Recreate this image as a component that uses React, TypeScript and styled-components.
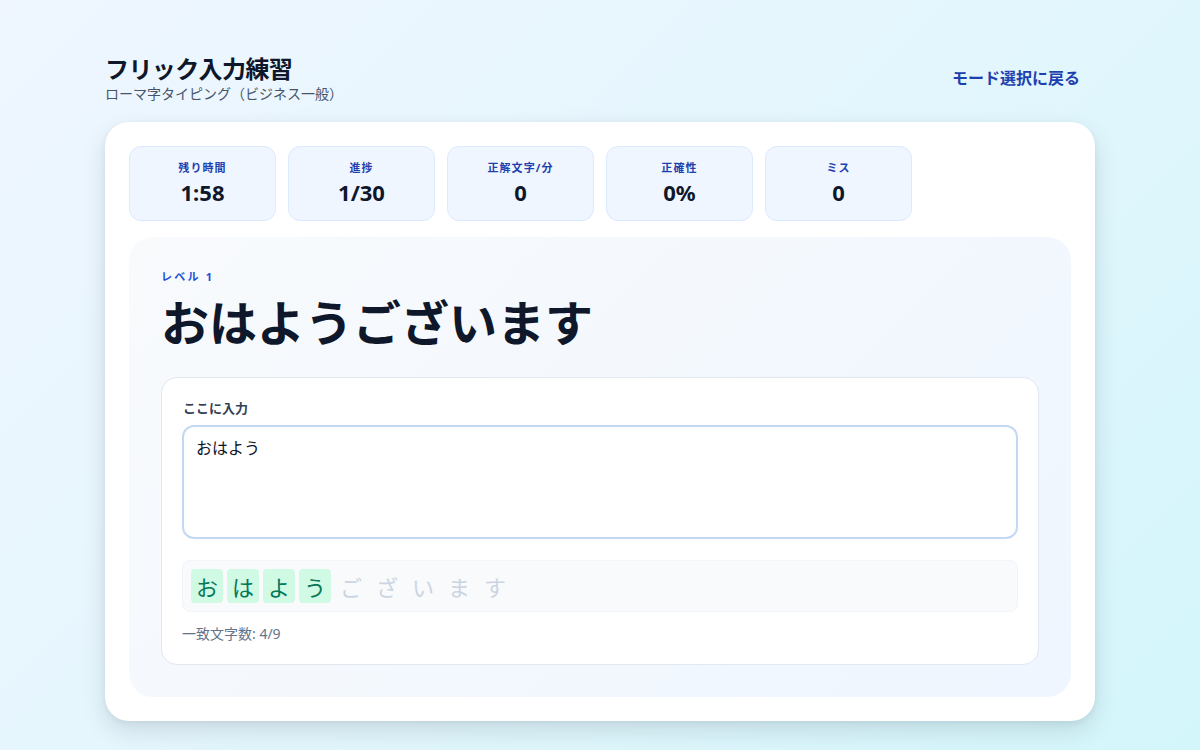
import React from "react";
import styled, { createGlobalStyle } from "styled-components";

const FONT = `"Noto Sans", "Noto Sans CJK JP", sans-serif`;

const Global = createGlobalStyle`
  * { box-sizing: border-box; }
  html, body { margin: 0; padding: 0; }
  body {
    font-family: ${FONT};
    color: #0f172a;
    min-height: 750px;
    background: linear-gradient(135deg, #eff6ff 0%, #e4f6fd 50%, #d3f6fb 100%);
  }
`;

const Page = styled.div`
  width: 1200px;
  height: 750px;
  padding: 54px 105px 0 105px;
  display: flex;
  flex-direction: column;
`;

const Header = styled.header`
  display: flex;
  justify-content: space-between;
  align-items: center;
  padding-right: 15px;
  margin-bottom: 18px;
`;

const TitleBlock = styled.div`
  display: flex;
  flex-direction: column;
`;

const Title = styled.h1`
  margin: 0;
  font-size: 24px;
  line-height: 30px;
  font-weight: 700;
  letter-spacing: -0.025em;
  color: #0f172a;
`;

const Subtitle = styled.p`
  margin: 0;
  font-size: 14px;
  line-height: 20px;
  color: #475569;
`;

const BackLink = styled.a`
  font-size: 16px;
  font-weight: 600;
  color: #1e40af;
  text-decoration: none;
  margin-top: -4px;
`;

const Card = styled.main`
  background: #ffffff;
  border-radius: 24px;
  padding: 24px;
  box-shadow: 0 10px 25px rgba(15, 23, 42, 0.12), 0 2px 6px rgba(15, 23, 42, 0.06);
  display: flex;
  flex-direction: column;
  gap: 16px;
`;

const Stats = styled.div`
  display: flex;
  gap: 12px;
`;

const Stat = styled.div`
  width: 147px;
  height: 75px;
  background: #eff6ff;
  border: 1px solid #dbeafe;
  border-radius: 12px;
  display: flex;
  flex-direction: column;
  align-items: center;
  justify-content: center;
  gap: 2px;
  padding-bottom: 1px;
`;

const StatLabel = styled.div`
  font-size: 11px;
  line-height: 16px;
  font-weight: 700;
  color: #1e40af;
  letter-spacing: 0.1em;
`;

const StatValue = styled.div`
  font-size: 22px;
  line-height: 28px;
  font-weight: 700;
  color: #0f172a;
`;

const Practice = styled.section`
  background: linear-gradient(135deg, #f8fafc 0%, #eff6ff 100%);
  border-radius: 24px;
  padding: 32px;
  display: flex;
  flex-direction: column;
`;

const Level = styled.div`
  font-size: 11px;
  line-height: 16px;
  font-weight: 700;
  color: #1d4ed8;
  letter-spacing: 0.2em;
`;

const Target = styled.h2`
  margin: 8px 0 24px 0;
  font-size: 48px;
  line-height: 60px;
  font-weight: 700;
  color: #0f172a;
`;

const InputCard = styled.div`
  background: #ffffff;
  border: 1px solid #e2e8f0;
  border-radius: 16px;
  padding: 20px;
  display: flex;
  flex-direction: column;
`;

const InputLabel = styled.label`
  font-size: 13px;
  line-height: 20px;
  font-weight: 700;
  color: #334155;
  margin-bottom: 7px;
  padding-left: 1px;
`;

const TextArea = styled.textarea`
  width: 100%;
  height: 114px;
  border: 2px solid #c3d8f2;
  border-radius: 12px;
  padding: 10px 12px;
  font-family: ${FONT};
  font-size: 16px;
  line-height: 22px;
  color: #0f172a;
  resize: none;
  outline: none;
  background: #ffffff;
`;

const CharRow = styled.div`
  margin-top: 21px;
  height: 52px;
  background: #f8fafc;
  border: 1px solid #f1f5f9;
  border-radius: 8px;
  padding: 0 8px;
  display: flex;
  align-items: center;
  gap: 4px;
`;

const Char = styled.span<{ $matched: boolean }>`
  width: 32px;
  height: 34px;
  display: flex;
  align-items: center;
  justify-content: center;
  border-radius: 4px;
  font-size: 22px;
  background: ${(p) => (p.$matched ? "#d1fae5" : "transparent")};
  color: ${(p) => (p.$matched ? "#047857" : "#cbd5e1")};
`;

const MatchCount = styled.div`
  margin-top: 12px;
  font-size: 14px;
  line-height: 20px;
  color: #64748b;
`;

const stats = [
  { label: "残り時間", value: "1:58" },
  { label: "進捗", value: "1/30" },
  { label: "正解文字/分", value: "0" },
  { label: "正確性", value: "0%" },
  { label: "ミス", value: "0" },
];

const target = "おはようございます";
const typed = "おはよう";

export default function App() {
  return (
    <>
      <Global />
      <Page>
        <Header>
          <TitleBlock>
            <Title>フリック入力練習</Title>
            <Subtitle>ローマ字タイピング（ビジネス一般）</Subtitle>
          </TitleBlock>
          <BackLink href="#">モード選択に戻る</BackLink>
        </Header>
        <Card>
          <Stats>
            {stats.map((s) => (
              <Stat key={s.label}>
                <StatLabel>{s.label}</StatLabel>
                <StatValue>{s.value}</StatValue>
              </Stat>
            ))}
          </Stats>
          <Practice>
            <Level>レベル 1</Level>
            <Target>{target}</Target>
            <InputCard>
              <InputLabel>ここに入力</InputLabel>
              <TextArea defaultValue={typed} />
              <CharRow>
                {target.split("").map((c, i) => (
                  <Char key={i} $matched={i < typed.length && typed[i] === c}>
                    {c}
                  </Char>
                ))}
              </CharRow>
              <MatchCount>一致文字数: 4/9</MatchCount>
            </InputCard>
          </Practice>
        </Card>
      </Page>
    </>
  );
}
